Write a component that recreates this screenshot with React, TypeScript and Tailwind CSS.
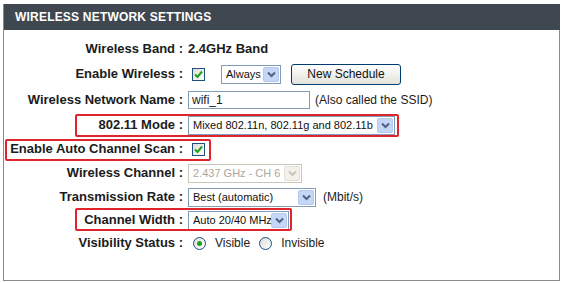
import type { ReactNode } from "react";

const font = { fontFamily: '"Liberation Sans", Arial, sans-serif' };

function Chevron({ disabled = false }: { disabled?: boolean }) {
  return (
    <span
      className={`flex shrink-0 items-center justify-center w-[16px] h-[15px] rounded-[2px] border ${
        disabled ? "border-[#e2e0d6] bg-[#f2f1ea]" : "border-[#b6c8ee] bg-[#c6d6f7]"
      }`}
    >
      <svg width="9" height="7" viewBox="0 0 9 7">
        <path
          d="M1 1.5 L4.5 5 L8 1.5"
          fill="none"
          stroke={disabled ? "#c9c7ba" : "#4d6185"}
          strokeWidth="2"
        />
      </svg>
    </span>
  );
}

function Select({
  text,
  width,
  disabled = false,
}: {
  text: string;
  width: string;
  disabled?: boolean;
}) {
  return (
    <span
      className={`flex items-center justify-between h-[19px] pl-[4px] pr-[1px] border text-[11px] ${width} ${
        disabled ? "border-[#c9c7ba] text-[#aca899]" : "border-[#7f9db9] text-[#111]"
      } bg-white`}
    >
      <span className="leading-none whitespace-nowrap overflow-hidden min-w-0">{text}</span>
      <Chevron disabled={disabled} />
    </span>
  );
}

function Checkbox() {
  return (
    <span className="flex items-center justify-center w-[13px] h-[13px] border border-[#1c5180] bg-gradient-to-br from-[#dcdcd7] to-white">
      <svg width="9" height="9" viewBox="0 0 9 9">
        <path d="M1 4.5 L3.5 7 L8 1.5" fill="none" stroke="#21a121" strokeWidth="2" />
      </svg>
    </span>
  );
}

function Radio({ checked }: { checked: boolean }) {
  return (
    <span className="flex items-center justify-center w-[13px] h-[13px] rounded-full border border-[#1c5180] bg-gradient-to-br from-[#dcdcd7] to-white">
      {checked && <span className="w-[5px] h-[5px] rounded-full bg-[#21a121]" />}
    </span>
  );
}

function Row({
  label,
  height,
  children,
  highlight,
}: {
  label: string;
  height: string;
  children: ReactNode;
  highlight?: string;
}) {
  return (
    <div className={`relative flex items-center ${height}`}>
      <div className="w-[179px] shrink-0 text-right text-[13px] font-bold text-[#1b1b1b] whitespace-nowrap">
        {label}
      </div>
      <div className="flex items-center pl-[5px] text-[12px] text-[#1b1b1b] whitespace-nowrap">{children}</div>
      {highlight && (
        <div className={`pointer-events-none absolute border-[2.5px] border-[#e0242c] rounded-[2px] ${highlight}`} />
      )}
    </div>
  );
}

export default function App() {
  return (
    <div className="w-[563px] h-[283px] bg-white pt-[4px] pl-[3px]" style={font}>
      <div className="w-[557px] h-[277px] border border-t-0 border-[#8a8a8a] flex flex-col">
        <div className="h-[26px] -mr-[1px] bg-[#3f4850] flex items-center pl-[11px] text-white text-[12px] font-bold tracking-[0.2px]">
          WIRELESS NETWORK SETTINGS
        </div>
        <div className="h-[7px]" />
        <Row label="Wireless Band :" height="h-[24px]">
          <span className="font-bold text-[13px]">2.4GHz Band</span>
        </Row>
        <Row label="Enable Wireless :" height="h-[26px]">
          <span className="ml-[4px]">
            <Checkbox />
          </span>
          <span className="ml-[16px]">
            <Select text="Always" width="w-[60px]" />
          </span>
          <button className="ml-[10px] w-[110px] h-[21px] rounded-[3px] border border-[#003c74] bg-gradient-to-b from-white to-[#e3e3db] text-[12px] text-[#111]">
            New Schedule
          </button>
        </Row>
        <Row label="Wireless Network Name :" height="h-[26px]">
          <span className="flex items-center w-[122px] h-[18px] border border-[#7f9db9] pl-[3px] text-[12px]">
            wifi_1
          </span>
          <span className="ml-[5px]">(Also called the SSID)</span>
        </Row>
        <Row
          label="802.11 Mode :"
          height="h-[24px]"
          highlight="left-[71px] top-[1px] w-[324px] h-[23px]"
        >
          <Select text="Mixed 802.11n, 802.11g and 802.11b" width="w-[207px]" />
        </Row>
        <Row
          label="Enable Auto Channel Scan :"
          height="h-[24px]"
          highlight="left-[1px] top-[2px] w-[206px] h-[22px]"
        >
          <span className="ml-[4px]">
            <Checkbox />
          </span>
        </Row>
        <Row label="Wireless Channel :" height="h-[24px]">
          <Select text="2.437 GHz - CH 6" width="w-[114px]" disabled />
        </Row>
        <Row label="Transmission Rate :" height="h-[24px]">
          <Select text="Best (automatic)" width="w-[128px]" />
          <span className="ml-[7px]">(Mbit/s)</span>
        </Row>
        <Row
          label="Channel Width :"
          height="h-[22px]"
          highlight="left-[71px] -top-[1px] w-[217px] h-[23px]"
        >
          <Select text="Auto 20/40 MHz" width="w-[101px]" />
        </Row>
        <Row label="Visibility Status :" height="h-[24px]">
          <span className="ml-[5px]">
            <Radio checked />
          </span>
          <span className="ml-[9px]">Visible</span>
          <span className="ml-[9px]">
            <Radio checked={false} />
          </span>
          <span className="ml-[9px]">Invisible</span>
        </Row>
      </div>
    </div>
  );
}
